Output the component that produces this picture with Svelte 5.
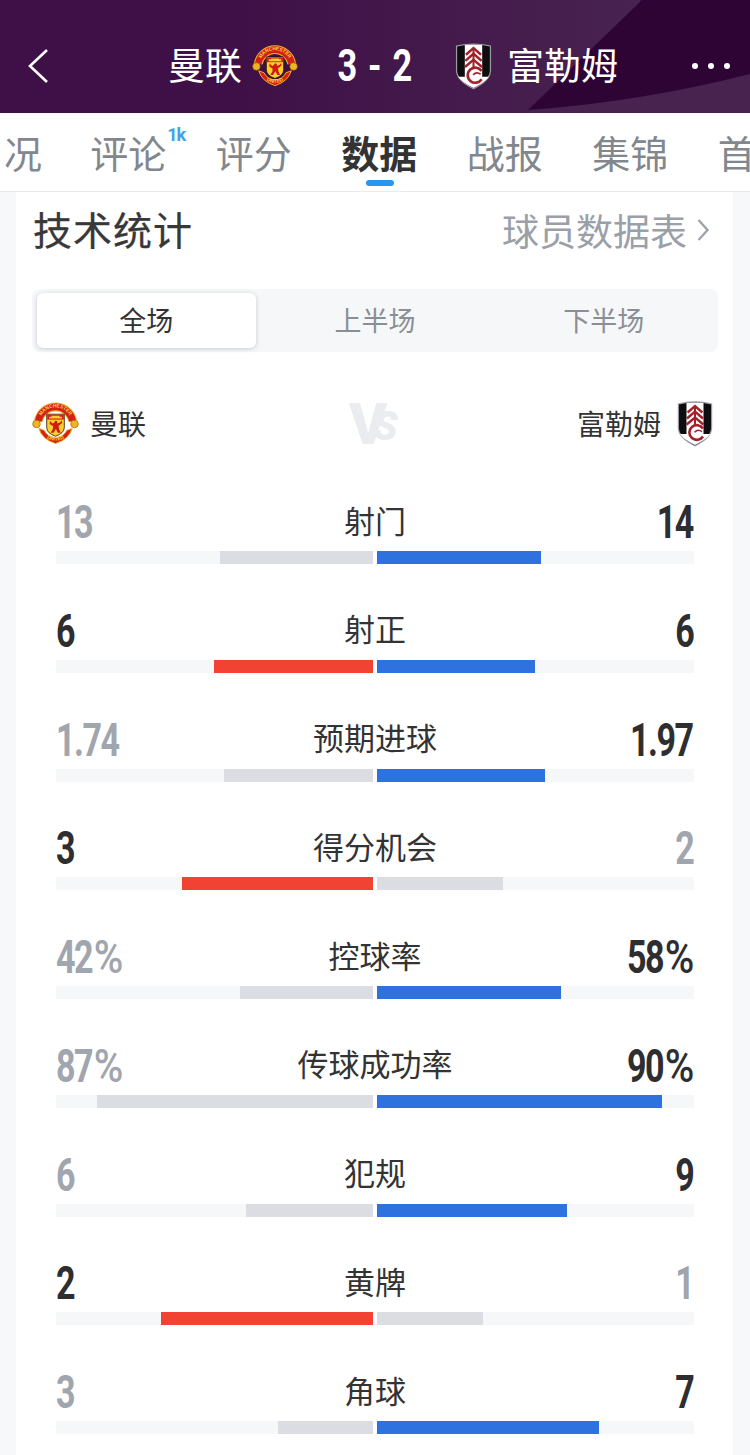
<script>
  const tabs = ['况', '评论', '评分', '数据', '战报', '集锦', '首页'];
  const stats = [
    { label: '射门', l: '13', r: '14', lw: 153, rw: 164, lc: 'grey', rc: 'blue', ld: false, rd: true },
    { label: '射正', l: '6', r: '6', lw: 159, rw: 158, lc: 'red', rc: 'blue', ld: true, rd: true },
    { label: '预期进球', l: '1.74', r: '1.97', lw: 149, rw: 168, lc: 'grey', rc: 'blue', ld: false, rd: true },
    { label: '得分机会', l: '3', r: '2', lw: 191, rw: 126, lc: 'red', rc: 'grey', ld: true, rd: false },
    { label: '控球率', l: '42', r: '58', pct: true, lw: 133, rw: 184, lc: 'grey', rc: 'blue', ld: false, rd: true },
    { label: '传球成功率', l: '87', r: '90', pct: true, lw: 276, rw: 285, lc: 'grey', rc: 'blue', ld: false, rd: true },
    { label: '犯规', l: '6', r: '9', lw: 127, rw: 190, lc: 'grey', rc: 'blue', ld: false, rd: true },
    { label: '黄牌', l: '2', r: '1', lw: 212, rw: 106, lc: 'red', rc: 'grey', ld: true, rd: false },
    { label: '角球', l: '3', r: '7', lw: 95, rw: 222, lc: 'grey', rc: 'blue', ld: false, rd: true }
  ];
</script>

{#snippet mu(size, uid, inner)}
  <svg class="crest" width={size} height={size} viewBox="0 0 48 48">
    <defs>
      <path id="top{uid}" d="M7.5 24 A16.5 16.5 0 0 1 40.5 24" />
      <path id="bot{uid}" d="M11 36.5 Q24 46.5 37 36.5" />
    </defs>
    <circle cx="24" cy="24" r="19" fill={inner} />
    <path d="M6.5 21.5 A17.8 17.8 0 0 1 41.5 21.5" fill="none" stroke="#efb420" stroke-width="9" />
    <path d="M6.5 21.5 A17.8 17.8 0 0 1 41.5 21.5" fill="none" stroke="#d5201a" stroke-width="7" />
    <path d="M7 29 Q10 40 24 44.5 Q38 40 41 29 L35.5 31 Q32 38 24 38.5 Q16 38 12.5 31 Z" fill="#d5201a" stroke="#efb420" stroke-width="1" />
    <circle cx="4.6" cy="24.5" r="3.9" fill="#efb420" stroke="#9a6a12" stroke-width=".7" />
    <circle cx="43.4" cy="24.5" r="3.9" fill="#efb420" stroke="#9a6a12" stroke-width=".7" />
    <text class="ring" font-size="5"><textPath href="#top{uid}" startOffset="50%" text-anchor="middle">MANCHESTER</textPath></text>
    <text class="ring" font-size="5"><textPath href="#bot{uid}" startOffset="50%" text-anchor="middle">UNITED</textPath></text>
    <path d="M15 14.5 H33 V28 Q33 34 24 37 Q15 34 15 28 Z" fill="#f8cf2c" stroke="#2a1508" stroke-width=".8" />
    <path d="M15.5 15 H32.5 V20 H15.5 Z" fill="#d5201a" />
    <path d="M17.5 19 V17 H20 V16.2 H28 V17 H30.5 V19 Z" fill="#f8cf2c" />
    <path d="M24 21 L26 22 L25.8 24 L29 22.8 L30.5 20.8 L30.8 23.6 L27.2 26.4 L27.6 29.8 L29.4 33.5 L26.4 33.5 L24.4 29.5 L22 33.5 L19 33.5 L21.4 29.5 L21.4 26.6 L18 24.4 L18.4 21.4 L21 24 L22.6 23.2 Z" fill="#cf1b14" />
  </svg>
{/snippet}

{#snippet fulham(w, h)}
  <svg class="crest" width={w} height={h} viewBox="0 0 36 47">
    <path d="M.8 3.5 Q18 -.8 35.2 3.5 V28 Q35.2 38 18 46.5 Q.8 38 .8 28 Z" fill="#9a9aa2" />
    <path d="M2 4.4 Q18 .7 34 4.4 V28 Q34 37 18 45.2 Q2 37 2 28 Z" fill="#0e0e10" />
    <path d="M9.5 3 Q18 2 26.5 3 V34 L33 34 Q30 39 18 45 Q6 39 3 34 L9.5 34 Z" fill="#fff" />
    <g fill="none" stroke="#a3222a">
      <path d="M10.6 12.5 L18 6 L25.4 12.5" stroke-width="2.4" />
      <path d="M10 18.5 L18 11.5 L26 18.5" stroke-width="2.4" />
      <path d="M9.6 24.5 L18 17.5 L26.4 24.5" stroke-width="2.4" />
      <path d="M18 6.5 V25" stroke-width="2" />
      <path d="M26 28.5 A7.4 7.4 0 1 0 26 36.5" stroke-width="2.6" />
      <path d="M25 31.6 Q21 28.6 17.6 32.2" stroke-width="1.6" />
    </g>
  </svg>
{/snippet}

<div class="page">
  <header class="head">
    <svg class="wedge" width="750" height="113" viewBox="0 0 750 113" preserveAspectRatio="none">
      <defs>
        <linearGradient id="lighter" x1="0" x2="1" y1="0" y2="0">
          <stop offset="0" stop-color="#3f1047" />
          <stop offset="1" stop-color="#482350" />
        </linearGradient>
      </defs>
      <rect x="240" width="400" height="113" fill="url(#lighter)" />
      <path d="M528 113 L642 0 H750 V113 Z" fill="#482350" />
      <path d="M528 110 L642 0 H750 V74 Q640 102 528 110 Z" fill="#2e0435" />
    </svg>
    <div class="side left">
      <svg class="back" width="24" height="36" viewBox="0 0 24 36"><path d="M21 2 L4 18 L21 34" fill="none" stroke="#fff" stroke-width="2.6" /></svg>
      <span class="team">曼联</span>
      {@render mu(46, 'a', '#3f1047')}
    </div>
    <div class="score"><span>3 - 2</span></div>
    <div class="side right">
      {@render fulham(37, 48)}
      <span class="team">富勒姆</span>
      <div class="dots"><i></i><i></i><i></i></div>
    </div>
  </header>

  <nav class="tabs">
    {#each tabs as t, i}
      <div class="tab" class:active={i === 3} class:single={i === 0}>
        <span class="tabtext">{t}{#if i === 1}<sup class="badge">1k</sup>{/if}</span>
        {#if i === 3}<span class="bar"></span>{/if}
      </div>
    {/each}
  </nav>

  <main class="card">
    <div class="titlerow">
      <h2>技术统计</h2>
      <div class="more">球员数据表
        <svg width="12" height="24" viewBox="0 0 12 24"><path d="M1.5 2 L10.5 12 L1.5 22" fill="none" stroke="#a0a4ac" stroke-width="2.4" /></svg>
      </div>
    </div>

    <div class="seg">
      <div class="opt on">全场</div>
      <div class="opt">上半场</div>
      <div class="opt">下半场</div>
    </div>

    <div class="teams">
      <div class="tm">{@render mu(47, 'b', '#fff')}<span>曼联</span></div>
      <div class="vs"><span class="v">V</span><span class="s">S</span></div>
      <div class="tm tmr"><span>富勒姆</span>{@render fulham(36, 47)}</div>
    </div>

    <div class="stats">
      {#each stats as s}
        <div class="stat">
          <div class="line">
            <div class="cell"><span class="num" class:dark={s.ld}>{s.l}{#if s.pct}<span class="pct">%</span>{/if}</span></div>
            <span class="label">{s.label}</span>
            <div class="cell cellr"><span class="num numr" class:dark={s.rd}>{s.r}{#if s.pct}<span class="pct">%</span>{/if}</span></div>
          </div>
          <div class="tracks">
            <div class="track ltrack"><div class="fill {s.lc}" style="width:{s.lw}px"></div></div>
            <div class="track"><div class="fill {s.rc}" style="width:{s.rw}px"></div></div>
          </div>
        </div>
      {/each}
    </div>
  </main>
</div>

<style>
  :global(body) { margin: 0; background: #f7f8fa; }
  .page {
    width: 750px; height: 1455px; overflow: hidden; background: #f7f8fa;
    font-family: "Noto Sans CJK SC", "Noto Sans", sans-serif; color: #333;
  }
  .head {
    position: relative; height: 113px; box-sizing: border-box; padding-top: 18px;
    background: #3f1047; color: #fff; overflow: hidden;
    display: grid; grid-template-columns: 1fr 74px 1fr; column-gap: 40px; align-items: center;
  }
  .wedge { position: absolute; left: 0; top: 0; }
  .side { position: relative; display: flex; align-items: center; height: 95px; }
  .left { padding-left: 26px; }
  .back { margin-right: auto; }
  .team { font-size: 37px; line-height: 1; margin-top: -2px; }
  .left .crest { margin-left: 10px; }
  .right { padding-left: 3px; }
  .right .team { margin-left: 15px; }
  .dots { margin-left: auto; margin-right: 20px; display: flex; gap: 10px; }
  .dots i { width: 6px; height: 6px; border-radius: 50%; background: #fff; display: block; }
  .score {
    position: relative; font-family: Roboto, sans-serif; font-weight: 700; font-size: 44px;
    text-align: center; white-space: nowrap; line-height: 1;
  }
  .score span { display: inline-block; transform: scaleX(.78); word-spacing: 3px; margin: 0 -20px; }
  .crest { display: block; flex: none; }
  .ring { fill: #f8d448; font-family: "Liberation Sans", sans-serif; font-weight: 700; }

  .tabs {
    height: 78px; background: #fff; border-bottom: 1px solid #e9eaec;
    display: flex; overflow: hidden; padding-left: 0;
  }
  .tab {
    position: relative; flex: 0 0 125.5px; text-align: center; font-size: 38px;
    line-height: 78px; color: #82878e; white-space: nowrap;
  }
  .tab.single { flex: 0 0 85px; margin-left: -19.5px; }
  .tabtext { position: relative; }
  .tab.active { color: #333; font-weight: 700; }
  .badge {
    position: absolute; left: 77px; top: 1px; font-size: 18px; line-height: 20px; font-weight: 700;
    color: #3fa2ea; font-family: Roboto, sans-serif; letter-spacing: -1px;
  }
  .bar {
    position: absolute; left: 49px; bottom: 5px; width: 28px; height: 6px; border-radius: 3px;
    background: #2a97ee;
  }

  .card {
    margin-left: 16px; width: 717px; height: 1263px; background: #fff; box-sizing: border-box;
    padding: 0 16px;
  }
  .titlerow {
    display: flex; justify-content: space-between; align-items: center; height: 76px;
    padding: 0 8px 0 2px;
  }
  h2 { margin: 0 0 4px -1px; font-size: 39px; font-weight: 400; color: #383838; letter-spacing: 1px; -webkit-text-stroke: .25px #383838; }
  .more { display: flex; align-items: center; gap: 10px; font-size: 37px; color: #9a9fa8; margin-left: -1px; }
  .seg {
    margin-top: 21px; height: 63px; box-sizing: border-box; padding: 4px 5px; background: #f6f7f9;
    border-radius: 8px; display: grid; grid-template-columns: repeat(3, 1fr); column-gap: 10px;
    width: 686px;
  }
  .opt { display: flex; align-items: center; justify-content: center; font-size: 27px; color: #8a8f96; border-radius: 6px; padding-bottom: 2px; }
  .opt.on { background: #fff; color: #333; box-shadow: 0 1px 4px rgba(60, 70, 90, .25); }
  .teams {
    margin-top: 48px; height: 47px; display: grid; grid-template-columns: 1fr auto 1fr; align-items: center;
    width: 687px; box-sizing: border-box; padding-right: 6px;
  }
  .tm { display: flex; align-items: center; gap: 11px; font-size: 28px; color: #333; }
  .tm span { margin-top: -2px; }
  .tmr { gap: 16px; justify-content: flex-end; }
  .vs {
    display: flex; align-items: flex-end; height: 47px; width: 53px; margin-left: 6px;
    font-family: Roboto, sans-serif; font-weight: 900; color: #ebecef;
  }
  .v { font-size: 58px; line-height: 46px; }
  .s { font-size: 40px; line-height: 40px; margin-left: -14px; font-style: italic; }
  .stats { margin-top: 55px; padding: 0 23px 0 24px; width: 638px; }
  .stat { height: 108.75px; }
  .line {
    height: 40px; display: grid; grid-template-columns: 1fr auto 1fr; align-items: center;
  }
  .cell { display: flex; }
  .cellr { justify-content: flex-end; }
  .num {
    display: block; font-family: Roboto, sans-serif; font-weight: 700; font-size: 46px;
    line-height: 40px; color: #a0a5ae; transform: scaleX(.74); transform-origin: left center; letter-spacing: -2px;
  }
  .pct {
    display: inline-block; font-weight: 500; margin-left: 2px; margin-right: 6px;
    transform: scaleX(1.18); transform-origin: left center;
  }
  .num.dark { color: #2e2e30; }
  .numr { transform-origin: right center; margin-right: 1px; }
  .label { font-size: 31px; line-height: 40px; color: #333; margin-top: -5px; }
  .tracks { margin-top: 9px; display: grid; grid-template-columns: 317px 317px; column-gap: 4px; }
  .track { height: 13px; background: #f6f7f9; display: flex; }
  .ltrack { justify-content: flex-end; }
  .fill { height: 13px; }
  .grey { background: #dbdde2; }
  .red { background: #f24234; }
  .blue { background: #2e72e0; }
</style>
